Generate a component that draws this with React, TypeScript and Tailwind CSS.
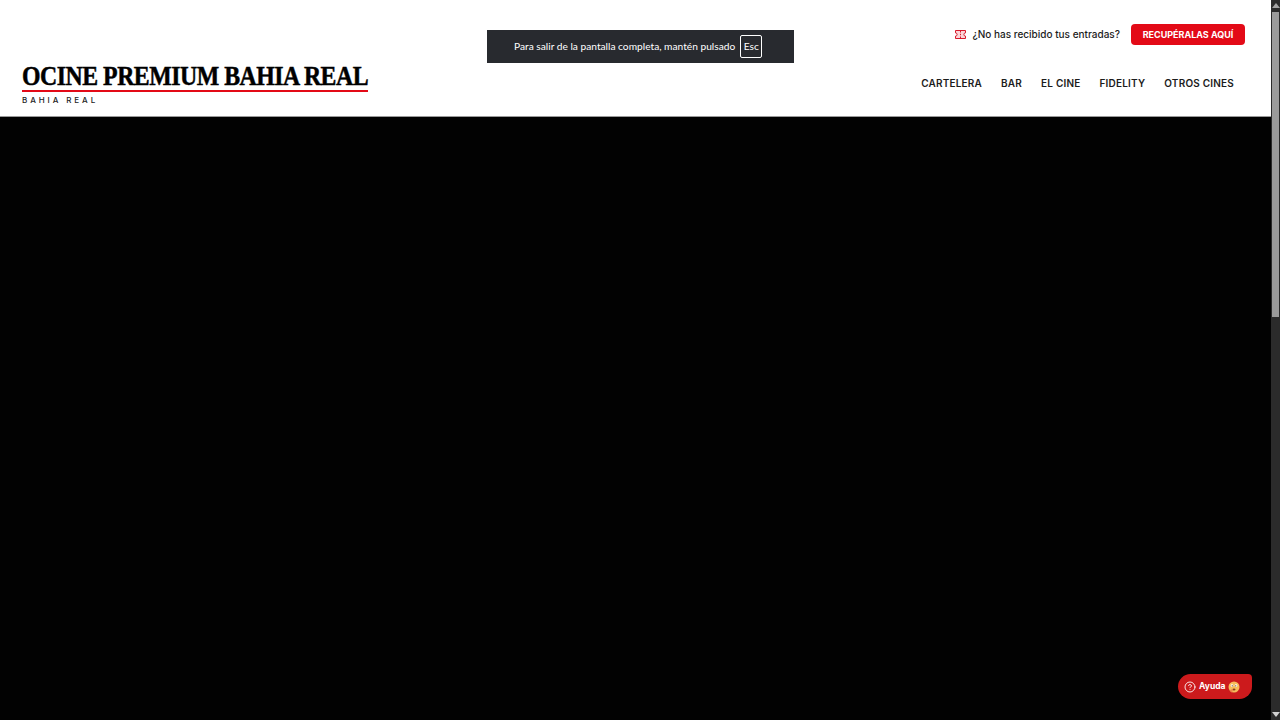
import { CircleHelp } from 'lucide-react';

const navItems = ['CARTELERA', 'BAR', 'EL CINE', 'FIDELITY', 'OTROS CINES'];

function TicketIcon() {
  return (
    <svg width="11" height="9" viewBox="0 0 11 9" className="shrink-0" aria-hidden="true">
      <path
        d="M0.5 0.5h10v2.4a1.6 1.6 0 0 0 0 3.2v2.4h-10v-2.4a1.6 1.6 0 0 0 0-3.2z"
        fill="#fbd5d8"
        stroke="#d8192b"
        strokeWidth="1"
      />
      <path d="M5.5 1v1.5M5.5 3.8v1.4M5.5 6.5V8" stroke="#d8192b" strokeWidth="1" />
    </svg>
  );
}

function ThinkingFace() {
  return (
    <svg width="12" height="12" viewBox="0 0 12 12" className="shrink-0" aria-hidden="true">
      <circle cx="6" cy="6" r="5.5" fill="#f6bd5c" />
      <circle cx="4" cy="4.6" r="1.3" fill="#fff" />
      <circle cx="8" cy="4.6" r="1.3" fill="#fff" />
      <circle cx="4.2" cy="4.8" r="0.6" fill="#40250c" />
      <circle cx="7.8" cy="4.8" r="0.6" fill="#40250c" />
      <ellipse cx="6" cy="8.4" rx="1.5" ry="1" fill="#8a3f14" />
      <path d="M1.5 9.5l2.5-1.5 1 2-1.5 1.5z" fill="#ef8a4a" />
    </svg>
  );
}

function Scrollbar() {
  return (
    <aside className="flex h-full w-[9px] shrink-0 flex-col items-center bg-[#2b2b2b]">
      <div className="mt-[3px] h-0 w-0 border-x-[4px] border-b-[5px] border-x-transparent border-b-[#a3a3a3]" />
      <div className="mt-[4px] h-[305px] w-[7px] bg-[#9b9b9b]" />
      <div className="mt-auto mb-[3px] h-0 w-0 border-x-[4px] border-t-[5px] border-x-transparent border-t-[#d0d0d0]" />
    </aside>
  );
}

export default function App() {
  return (
    <div className="relative flex h-screen w-full overflow-hidden bg-black font-['Inter',sans-serif]">
      <main className="flex min-w-0 flex-1 flex-col">
        <header className="flex h-[117px] shrink-0 items-stretch justify-between border-b border-[#9a9a9a] bg-white pr-[26px] pl-[22px]">
          {/* Logo */}
          <div className="mt-[63px] w-[346px]">
            <h1 className="border-b-2 border-[#e30a17] pb-[2px] font-['Liberation_Serif',serif] text-[27.5px] leading-[25px] font-bold tracking-[-0.55px] whitespace-nowrap text-black">
              <span className="inline-block origin-left scale-x-[0.865] [-webkit-text-stroke:0.5px_black]">
                OCINE PREMIUM BAHIA REAL
              </span>
            </h1>
            <p className="mt-[3px] text-[8px] leading-[10px] font-medium tracking-[2.9px] text-[#222]">
              BAHIA REAL
            </p>
          </div>

          <div className="flex flex-col items-end">
            <div className="mt-[24px] flex h-[21px] items-center">
              <TicketIcon />
              <span className="ml-[6px] text-[10px] font-medium text-[#1c1c1c]">
                ¿No has recibido tus entradas?
              </span>
              <button className="ml-[11px] flex h-[21px] w-[114px] items-center justify-center rounded-[4px] bg-[#e30a17] text-[9px] font-bold whitespace-nowrap text-white">
                RECUPÉRALAS AQUÍ
              </button>
            </div>
            <nav className="mt-[31px] mr-[11px] flex items-center gap-x-[19px]">
              {navItems.map((item) => (
                <a key={item} className="text-[10px] leading-[14px] font-semibold tracking-[0.2px] whitespace-nowrap text-[#1c1c1c]">
                  {item}
                </a>
              ))}
            </nav>
          </div>
        </header>
        <div className="flex-1 bg-[#020202]" />
      </main>
      <Scrollbar />

      {/* Browser fullscreen notice */}
      <div className="absolute top-[30px] left-[487px] flex h-[33px] w-[307px] items-center bg-[#282a2f] pl-[27px] font-['Lato',sans-serif] text-[10.2px] text-white">
        <span className="whitespace-nowrap">Para salir de la pantalla completa, mantén pulsado</span>
        <span className="ml-[5px] flex h-[23px] w-[22px] items-center justify-center rounded-[2px] border border-white">Esc</span>
      </div>

      {/* Help */}
      <button className="absolute top-[674px] left-[1178px] flex h-[25px] w-[74px] items-center rounded-tl-[13px] rounded-tr-[4px] rounded-br-[13px] rounded-bl-[13px] bg-[#cc1a1c] pl-[6px] text-[8.5px] font-bold text-white">
        <CircleHelp size={12} strokeWidth={1.75} className="shrink-0" />
        <span className="ml-[3px]">Ayuda</span>
        <span className="ml-[3px]">
          <ThinkingFace />
        </span>
      </button>
    </div>
  );
}
